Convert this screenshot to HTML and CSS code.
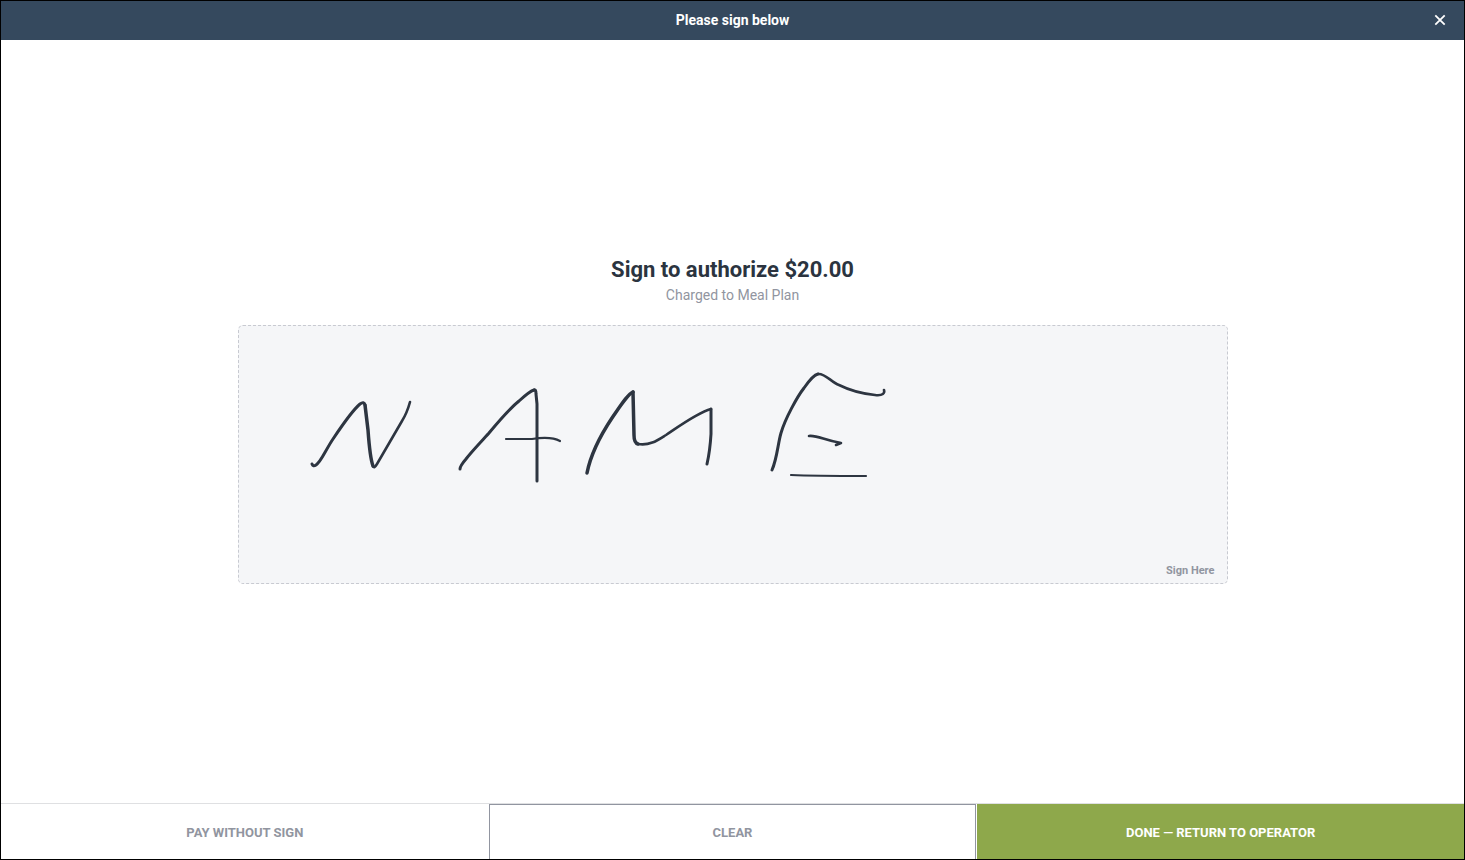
FILE: index.html
```html
<!DOCTYPE html>
<html lang="en">
<head>
    <meta charset="UTF-8">
    <meta name="viewport" content="width=device-width, initial-scale=1.0">
    <title>Please sign below</title>
    <link rel="stylesheet" href="styles.css">
</head>
<body>
    <header class="topbar">
        <h1 class="topbar-title">Please sign below</h1>
        <button type="button" class="close-btn" aria-label="Close">
            <svg width="12" height="12" viewBox="0 0 12 12">
                <path d="M1.3 1.3 L10.7 10.7 M10.7 1.3 L1.3 10.7"/>
            </svg>
        </button>
    </header>

    <main class="content">
        <h2 class="amount">Sign to authorize $20.00</h2>
        <p class="tender">Charged to Meal Plan</p>
        <div class="sign-pad">
            <svg class="signature" viewBox="0 0 988 257" role="img" aria-label="Signature">
                <!-- N -->
                <path class="thick" d="M73 138 Q74 141 77 139 C82 136 86 125 94 113 C102 101 114 84 121 78 Q125 75 126 79"/>
                <path class="heavy" d="M126 79 L129 104 Q131 132 134 140"/>
                <path d="M134 140 Q135 143 138 138 L163 95 Q168 87 171 76"/>
                <!-- A -->
                <path class="thick" d="M221 143 Q221 140 227 133 C234 124 242 116 250 107 Q269 84 280 75 Q291 65 295 64"/>
                <path class="thick" d="M295 64 Q297 63 297 68 L298 78 L298 155"/>
                <path class="thin" d="M267 113 L293 113 Q312 110 321 115"/>
                <!-- M -->
                <path class="heavy" d="M348 147 C352 127 363 107 373 92 C382 79 389 68 394 66"/>
                <path class="heavy" d="M394 66 L395 109 Q395 117 399 118"/>
                <path d="M399 118 C411 120 419 114 427 109 C442 99 458 87 472 83"/>
                <path class="thick" d="M472 83 L472 108 Q471 125 468 138"/>
                <!-- E -->
                <path class="thick" d="M533 144 C538 133 539 117 542 107 C546 93 558 71 565 62 Q574 49 579 48"/>
                <path d="M579 48 C586 47 592 56 600 59 Q616 67 636 69 C644 70 646 67 645 64"/>
                <path d="M570 110 C578 109 585 114 602 117 L597 119"/>
                <path class="thin" d="M552 149 Q574 150 627 150"/>
            </svg>
            <span class="sign-hint">Sign Here</span>
        </div>
    </main>

    <footer class="actions">
        <button type="button" class="btn">Pay without sign</button>
        <button type="button" class="btn btn-clear">Clear</button>
        <button type="button" class="btn btn-done">Done — Return to operator</button>
    </footer>
</body>
</html>
```

FILE: styles.css
```css
* {
    box-sizing: border-box;
}

body {
    display: flex;
    flex-direction: column;
    min-height: 100vh;
    margin: 0;
    border: 1px solid #000;
    background: #fff;
    color: #2b3440;
    font-family: Roboto, "Liberation Sans", sans-serif;
}

h1, h2, p {
    margin: 0;
}

button {
    margin: 0;
    padding: 0;
    border: 0;
    background: none;
    font-family: inherit;
    cursor: pointer;
}

.topbar {
    display: grid;
    grid-template-columns: 48px 1fr 48px;
    align-items: center;
    height: 39px;
    padding-bottom: 2px;
    background: #35495e;
    color: #fff;
}

.topbar-title {
    grid-column: 2;
    font-size: 14px;
    font-weight: 700;
    line-height: 20px;
    text-align: center;
}

.close-btn {
    display: flex;
    align-items: center;
    justify-content: center;
    height: 36px;
}

.close-btn svg {
    fill: none;
    stroke: #fff;
    stroke-width: 1.8;
}

.content {
    display: flex;
    flex: 1;
    flex-direction: column;
    align-items: center;
    justify-content: center;
    padding: 0 24px 2px;
}

.amount {
    margin-bottom: 2px;
    font-size: 22px;
    font-weight: 700;
    line-height: 26px;
}

.tender {
    margin-bottom: 20px;
    color: #9195a0;
    font-size: 14px;
    line-height: 20px;
}

.sign-pad {
    position: relative;
    width: 100%;
    max-width: 990px;
    border: 1px dashed #c8cad1;
    border-radius: 5px;
    background: #f5f6f8;
}

.signature {
    display: block;
    width: 100%;
    fill: none;
    stroke: #2d3541;
    stroke-width: 2.6;
    stroke-linecap: round;
    stroke-linejoin: round;
}

.signature .thin {
    stroke-width: 2.2;
}

.signature .thick {
    stroke-width: 3;
}

.signature .heavy {
    stroke-width: 3.5;
}

.sign-hint {
    position: absolute;
    right: 12px;
    bottom: 4px;
    color: #9195a0;
    font-size: 11px;
    font-weight: 700;
    line-height: 16px;
}

.actions {
    display: grid;
    grid-template-columns: repeat(3, 1fr);
    border-top: 1px solid #dfe0e2;
}

.btn {
    height: 55px;
    border: 1px solid transparent;
    border-bottom: 0;
    color: #9195a0;
    font-size: 13px;
    font-weight: 700;
    text-transform: uppercase;
}

.btn-clear {
    border-color: #9195a0;
}

.btn-done {
    margin-left: 1px;
    border-color: #8ea84b;
    background: #8ea84b;
    color: #fff;
}
```
